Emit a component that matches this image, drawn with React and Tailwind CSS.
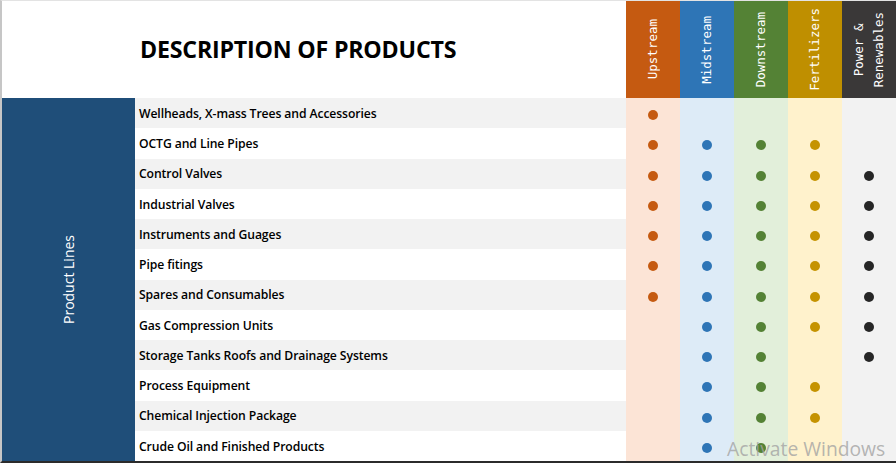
import React from 'react';

const columns = [
    { key: 'U', label: ['Upstream'], head: 'bg-[#c55a11]', cell: 'bg-[#fce4d6]', dot: 'bg-[#c55a11]' },
    { key: 'M', label: ['Midstream'], head: 'bg-[#2e75b6]', cell: 'bg-[#ddebf7]', dot: 'bg-[#2e75b6]' },
    { key: 'D', label: ['Downstream'], head: 'bg-[#548235]', cell: 'bg-[#e2efda]', dot: 'bg-[#548235]' },
    { key: 'F', label: ['Fertilizers'], head: 'bg-[#bf8f00]', cell: 'bg-[#fff2cc]', dot: 'bg-[#c59300]' },
    { key: 'P', label: ['Power &', 'Renewables'], head: 'bg-[#3a3838]', cell: 'bg-[#f2f2f2]', dot: 'bg-[#262626]' },
];

const products = [
    { name: 'Wellheads, X-mass Trees and Accessories', has: 'U' },
    { name: 'OCTG and Line Pipes', has: 'UMDF' },
    { name: 'Control Valves', has: 'UMDFP' },
    { name: 'Industrial Valves', has: 'UMDFP' },
    { name: 'Instruments and Guages', has: 'UMDFP' },
    { name: 'Pipe fitings', has: 'UMDFP' },
    { name: 'Spares and Consumables', has: 'UMDFP' },
    { name: 'Gas Compression Units', has: 'MDFP' },
    { name: 'Storage Tanks Roofs and Drainage Systems', has: 'MDP' },
    { name: 'Process Equipment', has: 'MDF' },
    { name: 'Chemical Injection Package', has: 'MDF' },
    { name: 'Crude Oil and Finished Products', has: 'MD' },
];

function App() {
    return (
        <div className="relative w-[896px] h-[463px] overflow-hidden bg-white border-l-2 border-l-[#c6c6c6] border-t border-t-[#e3e3e3] border-b-2 border-b-[#2b2b2b]">
            <div className="grid grid-cols-[133px_491px_repeat(5,54px)] grid-rows-[97px_repeat(12,30.25px)]">
                {/* Header */}
                <div className="col-span-2 flex items-center pl-[138px]">
                    <h1 className="text-[23.2px] font-bold text-black tracking-[-0.2px]" style={{ fontFamily: '"Open Sans", sans-serif' }}>
                        DESCRIPTION OF PRODUCTS
                    </h1>
                </div>
                {columns.map((c) => (
                    <div key={c.key} className={`${c.head} flex items-center justify-center`}>
                        <div
                            className="[writing-mode:vertical-rl] rotate-180 text-center text-white text-[12.5px] leading-[20px]"
                            style={{ fontFamily: '"DejaVu Sans Mono", monospace' }}
                        >
                            {c.label.map((l) => (
                                <div key={l}>{l}</div>
                            ))}
                        </div>
                    </div>
                ))}

                {/* Product Lines side bar */}
                <div className="row-span-12 bg-[#1f4e79] flex items-center justify-center">
                    <span
                        className="[writing-mode:vertical-rl] rotate-180 text-white text-[14px] font-medium"
                        style={{ fontFamily: '"Open Sans", sans-serif' }}
                    >
                        Product Lines
                    </span>
                </div>

                {products.map((p, i) => (
                    <React.Fragment key={p.name}>
                        <div
                            className={`${i % 2 === 0 ? 'bg-[#f2f2f2]' : 'bg-white'} flex items-center pl-[4px] pt-[2px] text-[12.2px] font-semibold text-black tracking-[-0.1px]`}
                            style={{ fontFamily: '"Open Sans", sans-serif' }}
                        >
                            {p.name}
                        </div>
                        {columns.map((c) => (
                            <div key={c.key} className={`${c.cell} flex items-center justify-center pt-[4px]`}>
                                {p.has.includes(c.key) && <span className={`${c.dot} w-[10px] h-[10px] rounded-full`} />}
                            </div>
                        ))}
                    </React.Fragment>
                ))}
            </div>

            {/* Windows activation watermark */}
            <div
                className="absolute left-[725px] top-[434px] text-[19.3px] text-[#a3a3a3]/80 pointer-events-none"
                style={{ fontFamily: '"Open Sans", sans-serif' }}
            >
                Activate Windows
            </div>
        </div>
    );
}

export default App;
